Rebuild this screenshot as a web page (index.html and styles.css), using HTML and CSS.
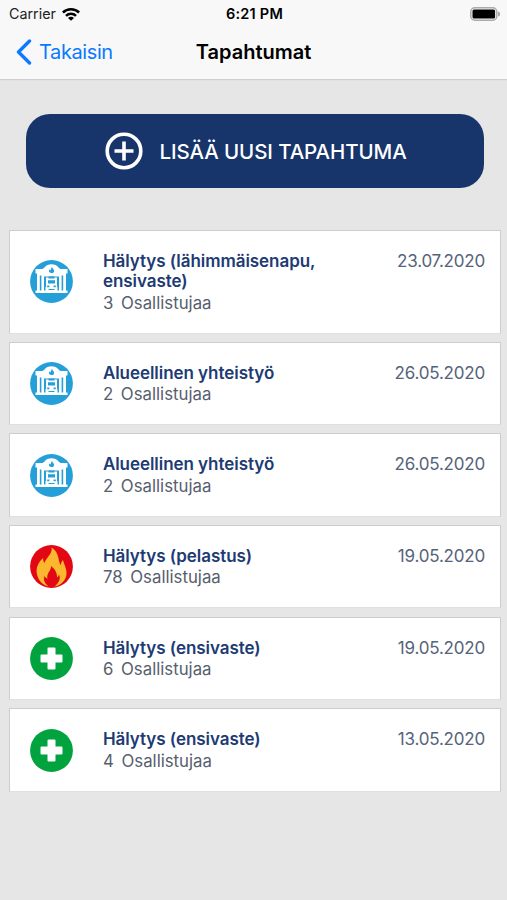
FILE: index.html
```html
<!DOCTYPE html>
<html lang="fi">
<head>
    <meta charset="UTF-8">
    <meta name="viewport" content="width=device-width, initial-scale=1.0">
    <title>Tapahtumat</title>
    <link rel="stylesheet" href="styles.css">
</head>
<body>
    <!-- Shared event icons -->
    <svg class="icon-defs" width="0" height="0">
        <symbol id="icon-station" viewBox="0 0 43 43">
            <circle cx="21.5" cy="21.5" r="21.4" fill="#249fd8"/>
            <path fill="#fff" d="M5.500 9h7l2-1.500c1.500-2.300 4-3.300 7-3.300s5.500 1 7 3.300l2 1.500h7v4.500H36v17h1.500V33h-32v-2.500H7v-17H5.500z"/>
            <path fill="#249fd8" d="M9.800 15.500h1.600v15H9.800zM31.600 15.500h1.600v15h-1.600zM14 16.500h15v14H14z"/>
            <path fill="#249fd8" d="M22 7c.300 1.500 2.400 2.500 2.100 4.200-.200 1.300-1.200 1.900-2.600 1.900s-2.600-.700-2.600-2c0-.800.500-1.400 1.100-1.900.100.600.300 1 .800 1.200C21 9.600 20.900 8.200 22 7z"/>
            <path fill="#fff" d="M16 17.500h11v9.500h.500v4.500h-12V27h.500z"/>
            <path fill="#249fd8" d="M18.500 16.500h6v2h-6zM18 20.200h7v3.300h-7zM17.200 25.500h2.200v1.800h-2.200zM23.600 25.500h2.200v1.800h-2.200zM18.500 29h6v1h-6z"/>
        </symbol>
        <symbol id="icon-fire" viewBox="0 0 43 43">
            <circle cx="21.500" cy="21.500" r="21.400" fill="#e30613"/>
            <path fill="#fbb82e" d="M21.500 2.500c1.500 6-5 9.500-7 15.500-1.200-1.500-1.500-3-1.300-5C8.500 17 5.500 22.500 7 29.500c1.500 6.500 6 10.500 11.500 12-3.500-3-5.500-6-4-10.500.800 1.500 1.800 2.300 3 2.600-1.500-5 4-8.100 3.500-12.600 4 3 6.300 7 6 11.500 1-.700 1.700-1.700 2-3 2 4.500-.500 9-4.500 12 6.500-1 11.500-6 12-12.500.400-5.500-2.500-9.500-3.500-14-1.500 1.500-2.200 3.200-2.300 5.500C27.500 14 29.500 7.500 21.500 2.500z"/>
        </symbol>
        <symbol id="icon-aid" viewBox="0 0 43 43">
            <circle cx="21.500" cy="21.500" r="21.400" fill="#00a33e"/>
            <path fill="#fff" d="M18.500 10.500h6a1 1 0 0 1 1 1v6h6a1 1 0 0 1 1 1v6a1 1 0 0 1-1 1h-6v6a1 1 0 0 1-1 1h-6a1 1 0 0 1-1-1v-6h-6a1 1 0 0 1-1-1v-6a1 1 0 0 1 1-1h6v-6a1 1 0 0 1 1-1z"/>
        </symbol>
    </svg>

    <header class="top">
        <div class="status-bar">
            <div class="carrier">
                <span>Carrier</span>
                <svg class="wifi" viewBox="0 0 18 14">
                    <g fill="none" stroke="#000" stroke-width="2.500">
                        <path d="M.900 5.500a11.500 11.500 0 0 1 16.200 0"/>
                        <path d="M4 8.800a7.100 7.100 0 0 1 10 0"/>
                    </g>
                    <path d="M9 13.800L6 11a4.200 4.200 0 0 1 6 0z"/>
                </svg>
            </div>
            <div class="time">6:21 PM</div>
            <svg class="battery" viewBox="0 0 30 14">
                <rect x=".800" y=".800" width="26" height="12.400" rx="4" fill="#f7f7f7" stroke="#aaa" stroke-width="1.500"/>
                <rect x="2.500" y="2.500" width="22.600" height="9" rx="1.500"/>
                <path d="M28 4.500c1.500.500 2.300 1.300 2.300 2.500s-.800 2-2.300 2.500z" fill="#aaa"/>
            </svg>
        </div>
        <nav class="nav-bar">
            <a class="back">
                <svg class="chevron" viewBox="0 0 16 26">
                    <path d="M13.500 2L2.500 13l11 11" fill="none" stroke="#0a7aff" stroke-width="3.400" stroke-linecap="round" stroke-linejoin="round"/>
                </svg>
                <span>Takaisin</span>
            </a>
            <h1>Tapahtumat</h1>
        </nav>
    </header>

    <main>
        <button class="add-btn">
            <svg class="plus" viewBox="0 0 38 38">
                <g fill="none" stroke="#fff" stroke-width="3.600">
                    <circle cx="19" cy="19" r="16.800"/>
                    <path d="M19 9.500v19M9.500 19h19"/>
                </g>
            </svg>
            <span>LISÄÄ UUSI TAPAHTUMA</span>
        </button>

        <div class="events">
            <div class="event">
                <svg class="icon"><use href="#icon-station"/></svg>
                <div class="info">
                    <h2>Hälytys (lähimmäisenapu, ensivaste)</h2>
                    <p><span>3</span> Osallistujaa</p>
                </div>
                <div class="date">23.07.2020</div>
            </div>
            <div class="event">
                <svg class="icon"><use href="#icon-station"/></svg>
                <div class="info">
                    <h2>Alueellinen yhteistyö</h2>
                    <p><span>2</span> Osallistujaa</p>
                </div>
                <div class="date">26.05.2020</div>
            </div>
            <div class="event">
                <svg class="icon"><use href="#icon-station"/></svg>
                <div class="info">
                    <h2>Alueellinen yhteistyö</h2>
                    <p><span>2</span> Osallistujaa</p>
                </div>
                <div class="date">26.05.2020</div>
            </div>
            <div class="event">
                <svg class="icon"><use href="#icon-fire"/></svg>
                <div class="info">
                    <h2>Hälytys (pelastus)</h2>
                    <p><span>78</span> Osallistujaa</p>
                </div>
                <div class="date">19.05.2020</div>
            </div>
            <div class="event">
                <svg class="icon"><use href="#icon-aid"/></svg>
                <div class="info">
                    <h2>Hälytys (ensivaste)</h2>
                    <p><span>6</span> Osallistujaa</p>
                </div>
                <div class="date">19.05.2020</div>
            </div>
            <div class="event">
                <svg class="icon"><use href="#icon-aid"/></svg>
                <div class="info">
                    <h2>Hälytys (ensivaste)</h2>
                    <p><span>4</span> Osallistujaa</p>
                </div>
                <div class="date">13.05.2020</div>
            </div>
        </div>
    </main>
</body>
</html>
```
FILE: styles.css
```css
* {
    margin: 0;
    padding: 0;
    box-sizing: border-box;
}

body {
    font-family: Inter, 'Liberation Sans', sans-serif;
    background: #e6e6e6;
    min-height: 100vh;
}

.icon-defs {
    display: block;
}

.top {
    height: 79px;
    background: #f8f8f8;
    box-shadow: 0 1px 1px #cfcfcf;
}

.status-bar {
    display: grid;
    grid-template-columns: 1fr auto 1fr;
    align-items: center;
    height: 27px;
    padding: 0 7px 0 9px;
}

.carrier {
    display: flex;
    align-items: center;
    gap: 6px;
    font-size: 14.3px;
    color: #222;
}

.wifi {
    width: 18px;
    height: 14px;
}

.time {
    font-size: 14.5px;
    font-weight: 600;
    letter-spacing: 0.25px;
}

.battery {
    width: 30px;
    height: 14px;
    justify-self: end;
}

.nav-bar {
    display: grid;
    grid-template-columns: 1fr auto 1fr;
    align-items: center;
    height: 50px;
    padding: 0 16px;
}

.back {
    display: flex;
    align-items: center;
    gap: 7px;
    font-size: 20px;
    letter-spacing: -0.4px;
    color: #0a7aff;
}

.chevron {
    width: 16px;
    height: 26px;
}

.nav-bar h1 {
    font-size: 20px;
    font-weight: 600;
    letter-spacing: 0;
}

.add-btn {
    display: flex;
    align-items: center;
    justify-content: center;
    gap: 16px;
    width: 458px;
    height: 74px;
    margin: 35px 0 0 26px;
    padding-left: 2px;
    border: none;
    border-radius: 24px;
    background: #17356b;
    color: #fff;
    font-family: inherit;
    font-size: 20.5px;
    font-weight: 500;
    letter-spacing: -0.1px;
    white-space: nowrap;
}

.plus {
    width: 38px;
    height: 38px;
}

.events {
    display: flex;
    flex-direction: column;
    gap: 8.2px;
    margin: 41.8px 6px 0 9.4px;
}

.event {
    display: flex;
    align-items: flex-start;
    padding: 20px 15px 18px 20px;
    background: #fff;
    border: 1px solid #cdcdcd;
    border-bottom-color: #e0e0e0;
}

.icon {
    flex: none;
    align-self: center;
    width: 43px;
    height: 43px;
    margin: -1.5px 30px 0 -0.5px;
}

.info {
    flex: 1;
}

.event h2 {
    max-width: 240px;
    font-size: 17px;
    font-weight: 600;
    letter-spacing: -0.05px;
    line-height: 20.4px;
    color: #203a73;
}

.event p {
    font-size: 16.8px;
    line-height: 23px;
    color: #56606e;
}

.event p span {
    margin-right: 3px;
}

.date {
    font-size: 17px;
    letter-spacing: -0.2px;
    line-height: 20.4px;
    color: #56637a;
}
```
